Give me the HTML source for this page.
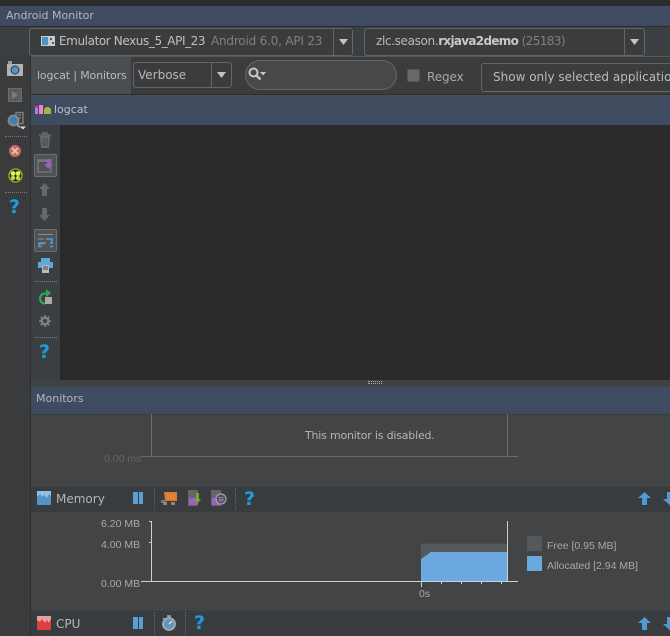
<!DOCTYPE html>
<html><head><meta charset="utf-8">
<style>
html,body{margin:0;padding:0;background:#3c3f41}
#p{position:relative;width:670px;height:636px;overflow:hidden;background:#3c3f41;font-family:"DejaVu Sans",sans-serif;font-size:12px;color:#bbb}
.a{position:absolute;box-sizing:border-box}
.t{position:absolute;white-space:nowrap;line-height:14px}
.c{position:absolute;white-space:nowrap;font-family:"Liberation Sans",sans-serif;font-size:10.5px;line-height:12px;color:#a9a9a9}
.bl{background:#3f4b60}
.q{position:absolute;font-family:"DejaVu Sans",sans-serif;font-weight:bold;color:#1b9ee0;font-size:19px;line-height:20px}
.dv{position:absolute;border-top:1px dotted #777;height:0}
.dh{position:absolute;border-left:1px dotted #666;width:0}
svg{position:absolute;overflow:visible}
</style></head><body><div id="p">
<div class="a" style="left:0;top:0;width:670px;height:6px;background:#2b2b2b"></div>
<div class="a bl" style="left:0;top:6px;width:670px;height:20px"></div>
<div class="t" style="left:6px;top:9px;font-size:11px;color:#b4b8bd">Android Monitor</div>
<div class="a" style="left:0;top:26px;width:670px;height:1px;background:#2d2e2f"></div>

<div class="a" style="left:29px;top:28px;width:324px;height:28px;border:1px solid #636567;border-radius:3px;background:#3a3c3e"></div>
<div class="a" style="left:333px;top:29px;width:1px;height:26px;background:#636567"></div>
<div class="a" style="left:41px;top:36px;width:14px;height:10px;background:#c7ccd0"></div>
<div class="a" style="left:42px;top:37px;width:6px;height:8px;background:#4f94c4"></div>
<div class="a" style="left:50px;top:38px;width:2px;height:2px;background:#555"></div>
<div class="a" style="left:52px;top:42px;width:2px;height:2px;background:#555"></div>
<div class="t" style="left:59px;top:34px;font-size:12px;color:#c0c0c0;letter-spacing:-.4px">Emulator Nexus_5_API_23</div>
<div class="t" style="left:211px;top:34px;font-size:12px;color:#808080;letter-spacing:-.2px">Android 6.0, API 23</div>
<svg style="left:338px;top:38px" width="12" height="8"><path d="M1 1h9l-4.5 6z" fill="#c4c4c4"/></svg>

<div class="a" style="left:364px;top:28px;width:281px;height:28px;border:1px solid #636567;border-radius:3px;background:#3a3c3e"></div>
<div class="a" style="left:624px;top:29px;width:1px;height:26px;background:#636567"></div>
<div class="t" style="left:376px;top:34px;font-size:12px;color:#b8b8b8;letter-spacing:-.35px">zlc.season.<b style="color:#c8c8c8;letter-spacing:-.7px">rxjava2demo</b> <span style="color:#808080;letter-spacing:-.6px">(25183)</span></div>
<svg style="left:629px;top:38px" width="12" height="8"><path d="M1 1h9l-4.5 6z" fill="#c4c4c4"/></svg>

<!-- left rail -->
<div class="a" style="left:0;top:56px;width:30px;height:580px;background:#393b3d"></div>
<div class="a" style="left:30px;top:56px;width:1px;height:580px;background:#2d2e2f"></div>
<div class="a" style="left:31px;top:56px;width:639px;height:1px;background:#555759"></div>
<svg style="left:7px;top:61px" width="16" height="15"><rect x="0" y="3" width="16" height="12" fill="#b0b2b4"/><rect x="1" y="0" width="4" height="3" fill="#9a9c9e"/><circle cx="8" cy="9" r="4" fill="#4b96d8" stroke="#333" stroke-width="1"/></svg>
<div class="a" style="left:8px;top:88px;width:14px;height:14px;background:#5a5c5e;border:1px solid #6a6c6e"></div>
<svg style="left:12px;top:91px" width="7" height="8"><path d="M0 0l6 4-6 4z" fill="#7b7d7f"/></svg>
<svg style="left:7px;top:112px" width="18" height="18"><rect x="9" y="0.500" width="7" height="11" fill="none" stroke="#808080" stroke-width="1.400"/><path d="M11 3h3M11 6h3" stroke="#808080" stroke-width="1.500"/><circle cx="6.500" cy="8.500" r="5" fill="#3d7fb5" stroke="#8a8a8a" stroke-width="1.800"/><path d="M10 12.500l3 3" stroke="#999" stroke-width="2"/><path d="M13 14.500h6l-3 3z" fill="#ddd"/></svg>
<div class="dv" style="left:5px;top:136px;width:22px"></div>
<svg style="left:8px;top:144px" width="14" height="14"><circle cx="7" cy="7" r="6" fill="#c9685c"/><path d="M4 4l6 6M10 4l-6 6" stroke="#dcc8bd" stroke-width="1.800"/></svg>
<svg style="left:8px;top:168px" width="15" height="15"><circle cx="7.500" cy="7.500" r="6.500" fill="#23281c" stroke="#99b826" stroke-width="1.300"/><circle cx="5" cy="5.500" r="2.400" fill="#e4ee50"/><circle cx="10" cy="5.500" r="2.400" fill="#e4ee50"/><circle cx="5" cy="10" r="2.200" fill="#c9d84a"/><circle cx="10" cy="10" r="2.200" fill="#c9d84a"/></svg>
<div class="dv" style="left:5px;top:192px;width:22px"></div>
<div class="q" style="left:9px;top:197px">?</div>

<!-- row 2 -->
<div class="a" style="left:31px;top:57px;width:100px;height:38px;background:#4b4e50"></div>
<div class="t" style="left:37px;top:69px;font-size:11px;color:#b8bcc0;letter-spacing:-.15px">logcat | Monitors</div>
<div class="a" style="left:131px;top:57px;width:539px;height:37px;background:#3a3c3e"></div>
<div class="a" style="left:31px;top:94px;width:639px;height:3px;background:#4b4e50;border-top:1px solid #2d2e2f"></div>
<div class="a" style="left:133px;top:62px;width:99px;height:26px;border:1px solid #636567;border-radius:3px"></div>
<div class="a" style="left:211px;top:63px;width:1px;height:24px;background:#636567"></div>
<div class="t" style="left:138px;top:68px;font-size:12px;color:#b8b8b8">Verbose</div>
<svg style="left:216px;top:71px" width="12" height="8"><path d="M1 1h9l-4.500 6z" fill="#c4c4c4"/></svg>
<div class="a" style="left:245px;top:60px;width:152px;height:30px;border:1px solid #646668;border-radius:15px;background:#464849"></div>
<svg style="left:248px;top:67px" width="20" height="15"><circle cx="5.500" cy="5.500" r="4" fill="none" stroke="#c6c6c6" stroke-width="2"/><path d="M8.500 8.500l4 4" stroke="#c6c6c6" stroke-width="2.400"/><path d="M12 5h6l-3 3.500z" fill="#c6c6c6"/></svg>
<div class="a" style="left:407px;top:69px;width:13px;height:13px;border-radius:2px;background:#666869;border:1px solid #555"></div>
<div class="t" style="left:427px;top:70px;font-size:12px;color:#a8a8a8;letter-spacing:-.1px">Regex</div>
<div class="a" style="left:481px;top:63px;width:200px;height:29px;border:1px solid #636567;border-radius:3px"></div>
<div class="t" style="left:493px;top:70px;font-size:12px;color:#bbb">Show only selected application</div>

<!-- logcat bar -->
<div class="a bl" style="left:31px;top:97px;width:639px;height:28px"></div>
<svg style="left:35px;top:105px" width="17" height="10"><rect x="0" y="1" width="3" height="8" fill="#d96bd8"/><rect x="0" y="1" width="3" height="2" fill="#e36"/><rect x="0" y="5" width="3" height="2" fill="#5ad"/><rect x="4" y="0" width="4" height="9" fill="#f07fd8"/><path d="M9 9V5a3.500 3 0 0 1 7 0v4z" fill="#a3b545"/></svg>
<div class="t" style="left:54px;top:103px;font-size:11px;color:#bcc0c6">logcat</div>

<!-- logcat area -->
<div class="a" style="left:31px;top:125px;width:29px;height:255px;background:#3c3f41"></div>
<div class="a" style="left:60px;top:125px;width:610px;height:255px;background:#2a2a2a"></div>
<svg style="left:38px;top:132px" width="14" height="16"><path d="M1 3h12M5 3V1h4v2" stroke="#6a6c6e" stroke-width="1.500" fill="none"/><path d="M2 4h10l-1 12H3z" fill="#66686a"/><path d="M5 6v8M7 6v8M9 6v8" stroke="#46484a"/></svg>
<div class="a" style="left:34px;top:154px;width:23px;height:23px;background:#505356;border:1px solid #6c6e70;border-radius:2px"></div>
<svg style="left:38px;top:159px" width="17" height="14"><rect x="0" y="1" width="13" height="12" fill="none" stroke="#777" stroke-width="1.400"/><rect x="0" y="1" width="13" height="2" fill="#777"/><path d="M9 0h3v5h3l-4.500 5L6 5h3z" fill="#9a5fc4"/></svg>
<svg style="left:38px;top:183px" width="13" height="13"><path d="M6.500 0L12 6H9v7H4V6H1z" fill="#66686a"/></svg>
<svg style="left:38px;top:208px" width="13" height="13"><path d="M6.500 13L12 7H9V0H4v7H1z" fill="#66686a"/></svg>
<div class="a" style="left:34px;top:229px;width:23px;height:23px;background:#505356;border:1px solid #6c6e70;border-radius:2px"></div>
<svg style="left:38px;top:233px" width="16" height="15" fill="none" stroke="#8a8c8e"><path d="M0 1.500h15M0 6h6M0 11h6"/><path d="M8 6h6v4h-2M8 10H1v3.500h3M12 13.500h3" stroke="#4d9fdc" stroke-width="1.500"/></svg>
<svg style="left:38px;top:258px" width="15" height="15"><rect x="3" y="0" width="9" height="4" fill="#5da7dc"/><rect x="0" y="4" width="15" height="6" fill="#5da7dc"/><rect x="4" y="7" width="7" height="8" fill="#b8babc"/><path d="M5 9h5M5 11h5" stroke="#444"/></svg>
<div class="dv" style="left:35px;top:281px;width:22px"></div>
<svg style="left:38px;top:289px" width="15" height="16"><path d="M9 4.500H7a5 5 0 1 0 0 10" fill="none" stroke="#2fa84f" stroke-width="2.200"/><path d="M8 0l5 4-5 4z" fill="#2fa84f"/><rect x="7" y="8" width="7" height="7" fill="#a8aaac"/></svg>
<svg style="left:39px;top:315px" width="12" height="12"><circle cx="6" cy="6" r="3.300" fill="none" stroke="#808284" stroke-width="2.400"/><path d="M6 0v12M0 6h12M1.800 1.800l8.400 8.400M10.200 1.800l-8.400 8.400" stroke="#808284" stroke-width="1.600" stroke-dasharray="2 8"/></svg>
<div class="dv" style="left:35px;top:337px;width:22px"></div>
<div class="q" style="left:39px;top:342px">?</div>

<!-- splitter -->
<div class="a" style="left:31px;top:380px;width:639px;height:7px;background:#3f4244"></div>
<div class="dv" style="left:368px;top:381px;width:14px;border-top-color:#aaa"></div>
<div class="dv" style="left:368px;top:383px;width:14px;border-top-color:#aaa"></div>

<!-- monitors -->
<div class="a bl" style="left:31px;top:387px;width:639px;height:27px"></div>
<div class="t" style="left:36px;top:392px;font-size:11px;color:#b4b8bd">Monitors</div>
<div class="a" style="left:31px;top:414px;width:639px;height:73px;background:#424445;border-top:1px solid #393b3d"></div>
<div class="a" style="left:151px;top:414px;width:1px;height:42px;background:#6a6c6e"></div>
<div class="a" style="left:507px;top:414px;width:1px;height:42px;background:#6a6c6e"></div>
<div class="a" style="left:141px;top:456px;width:377px;height:1px;background:#6a6c6e"></div>
<div class="c" style="left:104px;top:453px;color:#626465">0.00 ms</div>
<div class="t" style="left:305px;top:429px;font-size:11px;color:#b4b6b8;letter-spacing:-.2px">This monitor is disabled.</div>

<!-- memory row -->
<div class="a" style="left:31px;top:487px;width:639px;height:25px;background:#393c3e"></div>
<svg style="left:37px;top:491px" width="14" height="14"><rect width="14" height="14" fill="#8fc0e6"/><path d="M0 14V6l3-3 2 3 2-2 3 3 2-4 2 2v9z" fill="#4f93c7"/></svg>
<div class="t" style="left:56px;top:492px;font-size:12px;color:#b6b6b6">Memory</div>
<div class="a" style="left:133px;top:492px;width:5px;height:12px;background:#5a9fd4"></div>
<div class="a" style="left:139px;top:492px;width:4px;height:12px;background:#5a9fd4"></div>
<div class="dh" style="left:154px;top:488px;height:24px"></div>
<svg style="left:161px;top:491px" width="16" height="14"><path d="M3 1h13v9H4z" fill="#d9772f"/><path d="M0 9h5v3H0z" fill="#777"/><rect x="2" y="11" width="4" height="3" fill="#888"/><rect x="10" y="11" width="4" height="3" fill="#888"/><path d="M7 2v7M10 2v7M13 2v7" stroke="#f09a50"/></svg>
<svg style="left:188px;top:490px" width="14" height="16"><rect x="0" y="0" width="10" height="16" fill="#666"/><rect x="1" y="8" width="8" height="7" fill="#9a5fc4"/><path d="M8 3h3v6h2l-3.500 5L6 9h2z" fill="#71a82f"/></svg>
<svg style="left:211px;top:490px" width="16" height="16"><rect x="0" y="0" width="10" height="16" fill="#666"/><rect x="1" y="8" width="8" height="7" fill="#9a5fc4"/><circle cx="10" cy="9" r="5" fill="#4c4e50" stroke="#a79ab8" stroke-width="1.300"/><path d="M7.500 7.500h5M7.500 9.500h5M7.500 11h5" stroke="#b09ad0" stroke-width=".8"/></svg>
<div class="dh" style="left:235px;top:488px;height:24px"></div>
<div class="q" style="left:244px;top:489px">?</div>
<svg style="left:638px;top:492px" width="13" height="13"><path d="M6.500 0L13 6H9v7H4V6H0z" fill="#4f9ad4"/></svg>
<svg style="left:663px;top:492px" width="13" height="13"><path d="M6.500 13L13 7H9V0H4v7H0z" fill="#4f9ad4"/></svg>

<!-- memory chart -->
<div class="a" style="left:31px;top:511px;width:639px;height:100px;background:#424445;border-top:1px solid #393b3d"></div>
<div class="a" style="left:151px;top:521px;width:1px;height:61px;background:#cfcfcf"></div>
<div class="a" style="left:149px;top:521px;width:2px;height:1px;background:#cfcfcf"></div>
<div class="a" style="left:149px;top:542px;width:2px;height:1px;background:#cfcfcf"></div>
<div class="a" style="left:141px;top:581px;width:377px;height:1px;background:#cfcfcf"></div>
<div class="c" style="left:101px;top:518px">6.20 MB</div>
<div class="c" style="left:101px;top:539px">4.00 MB</div>
<div class="c" style="left:101px;top:578px">0.00 MB</div>
<svg style="left:421px;top:543px" width="86" height="38"><rect x="0" y="0" width="86" height="38" fill="#55585c"/><rect x="0" y="0" width="86" height="1" fill="#4a4c4f"/><path d="M0 38V16l10-7h76V38z" fill="#6ca8e0"/></svg>
<div class="a" style="left:507px;top:521px;width:1px;height:61px;background:#cfcfcf"></div>
<div class="a" style="left:421px;top:582px;width:1px;height:5px;background:#cfcfcf"></div>
<div class="a" style="left:441px;top:582px;width:1px;height:2px;background:#cfcfcf"></div>
<div class="a" style="left:461px;top:582px;width:1px;height:2px;background:#cfcfcf"></div>
<div class="a" style="left:481px;top:582px;width:1px;height:2px;background:#cfcfcf"></div>
<div class="a" style="left:501px;top:582px;width:1px;height:2px;background:#cfcfcf"></div>
<div class="c" style="left:419px;top:588px">0s</div>
<div class="a" style="left:527px;top:536px;width:15px;height:15px;background:#54575b"></div>
<div class="a" style="left:527px;top:556px;width:15px;height:15px;background:#6ca8e0"></div>
<div class="c" style="left:547px;top:540px">Free [0.95 MB]</div>
<div class="c" style="left:547px;top:560px">Allocated [2.94 MB]</div>

<!-- cpu row -->
<div class="a" style="left:31px;top:611px;width:639px;height:25px;background:#393c3e"></div>
<svg style="left:37px;top:616px" width="14" height="14"><rect width="14" height="14" fill="#e7a0a0"/><path d="M0 14V4l3 2 2-3 3 4 2-3 2 3 2-4v11z" fill="#df3f42"/></svg>
<div class="t" style="left:56px;top:617px;font-size:12px;color:#b6b6b6">CPU</div>
<div class="a" style="left:133px;top:617px;width:5px;height:12px;background:#5a9fd4"></div>
<div class="a" style="left:139px;top:617px;width:4px;height:12px;background:#5a9fd4"></div>
<div class="dh" style="left:154px;top:612px;height:24px"></div>
<svg style="left:161px;top:615px" width="16" height="16"><circle cx="8" cy="9" r="6" fill="#5a96c8" stroke="#aaa" stroke-width="1.800"/><path d="M6 1h4M8 1v2M2 3l2 2" stroke="#aaa" stroke-width="1.500"/><path d="M8 9l3-3" stroke="#dde" stroke-width="1.300"/></svg>
<div class="dh" style="left:185px;top:612px;height:24px"></div>
<div class="q" style="left:194px;top:613px">?</div>
<svg style="left:638px;top:617px" width="13" height="13"><path d="M6.500 0L13 6H9v7H4V6H0z" fill="#4f9ad4"/></svg>
<svg style="left:663px;top:617px" width="13" height="13"><path d="M6.500 13L13 7H9V0H4v7H0z" fill="#4f9ad4"/></svg>
</div></body></html>
